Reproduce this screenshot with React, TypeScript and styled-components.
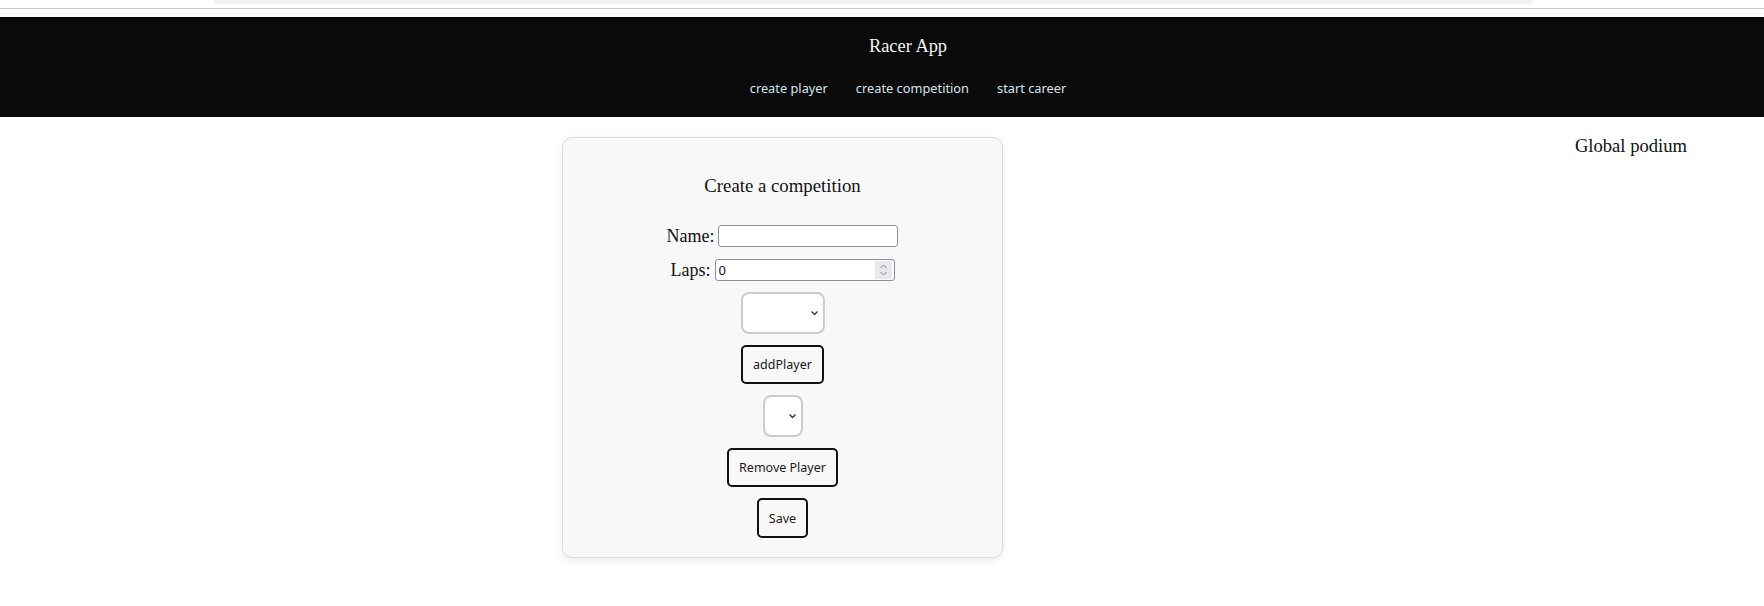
import React from "react";
import styled, { createGlobalStyle } from "styled-components";

const GlobalStyle = createGlobalStyle`
  html, body {
    margin: 0;
    padding: 0;
    background: #ffffff;
  }
  body {
    font-family: "Liberation Serif", "DejaVu Serif", serif;
    color: #111111;
  }
  * { box-sizing: border-box; }
`;

const Page = styled.div`
  width: 1764px;
  min-height: 606px;
  background: #ffffff;
`;

const TopStrip = styled.div`
  height: 17px;
  display: flex;
  flex-direction: column;
`;

const Tab = styled.div`
  margin-left: 214px;
  width: 1319px;
  height: 4px;
  background: #f1f1f1;
  border-radius: 0 0 6px 6px;
`;

const Divider = styled.div`
  margin-top: 4px;
  height: 1px;
  background: #c8c8c8;
`;

const Header = styled.header`
  height: 100px;
  background: #0a0a0a;
  display: flex;
  flex-direction: column;
  align-items: center;
  padding-top: 19px;
`;

const Title = styled.div`
  font-family: "Liberation Serif", serif;
  font-size: 18.4px;
  line-height: 20px;
  color: #f2f2f2;
  margin-left: 52px;
`;

const Nav = styled.nav`
  margin-top: 24px;
  display: flex;
  gap: 28px;
  margin-left: 52px;
`;

const NavLink = styled.a`
  font-family: "Noto Sans", "Open Sans", sans-serif;
  font-size: 12.8px;
  line-height: 16px;
  color: #d3e4f1;
  text-decoration: none;
  cursor: pointer;
`;

const Main = styled.main`
  display: flex;
  align-items: flex-start;
`;

const Card = styled.section`
  margin-top: 20px;
  margin-left: 562px;
  width: 441px;
  background: #f8f8f8;
  border: 1px solid #dcdcdc;
  border-radius: 10px;
  box-shadow: 0 3px 8px rgba(0, 0, 0, 0.08);
  padding: 37px 20px 19px;
  display: flex;
  flex-direction: column;
  align-items: center;
  gap: 11px;
`;

const CardTitle = styled.h3`
  margin: 0 0 17px;
  font-family: "Liberation Serif", serif;
  font-weight: normal;
  font-size: 18.8px;
  line-height: 22px;
  color: #111;
`;

const FieldRow = styled.label<{ $extra?: number }>`
  display: flex;
  align-items: center;
  gap: 4px;
  height: 22px;
  margin-top: ${(p) => p.$extra ?? 0}px;
`;

const LabelText = styled.span`
  font-family: "Liberation Serif", serif;
  font-size: 18px;
  color: #111;
`;

const TextInput = styled.input`
  width: 180px;
  height: 22px;
  border: 1px solid #8f8d9d;
  border-radius: 3px;
  background: #ffffff;
  font-family: "Noto Sans", sans-serif;
  font-size: 13px;
  padding: 0 3px;
  outline: none;
  color: #111;
  &::-webkit-inner-spin-button,
  &::-webkit-outer-spin-button {
    -webkit-appearance: none;
    margin: 0;
  }
  -moz-appearance: textfield;
`;

const NumberWrap = styled.div`
  position: relative;
  display: flex;
`;

const Spinner = styled.span`
  position: absolute;
  right: 3px;
  top: 2px;
  width: 17px;
  height: 18px;
  background: #e9e9ed;
  display: flex;
  align-items: center;
  justify-content: center;
  pointer-events: none;
`;

const SelectWrap = styled.div<{ $w: number; $h: number }>`
  position: relative;
  width: ${(p) => p.$w}px;
  height: ${(p) => p.$h}px;
`;

const Select = styled.select`
  appearance: none;
  -webkit-appearance: none;
  width: 100%;
  height: 100%;
  border: 2px solid #cccccc;
  border-radius: 8px;
  background: #ffffff;
  font-family: "Noto Sans", sans-serif;
  font-size: 13px;
  outline: none;
`;

const Chevron = styled.svg`
  position: absolute;
  right: 6px;
  top: 50%;
  margin-top: -4px;
  pointer-events: none;
`;

const Button = styled.button<{ $h?: number }>`
  height: ${(p) => p.$h ?? 39}px;
  padding: 0 10px;
  border: 2px solid #111111;
  border-radius: 5px;
  background: #f8f8f8;
  font-family: "Noto Sans", "Open Sans", sans-serif;
  font-size: 12.5px;
  color: #1a1a1a;
  cursor: pointer;
`;

const Podium = styled.h3`
  margin: 18px 77px 0 auto;
  font-family: "Liberation Serif", serif;
  font-weight: normal;
  font-size: 18.6px;
  line-height: 22px;
  color: #111;
`;

const ChevronIcon = () => (
  <Chevron width="9" height="8" viewBox="0 0 9 8">
    <path d="M1.5 2.5 L4.5 5.5 L7.5 2.5" fill="none" stroke="#333" strokeWidth="1.3" />
  </Chevron>
);

export default function App() {
  return (
    <Page>
      <GlobalStyle />
      <TopStrip>
        <Tab />
        <Divider />
      </TopStrip>
      <Header>
        <Title>Racer App</Title>
        <Nav>
          <NavLink>create player</NavLink>
          <NavLink>create competition</NavLink>
          <NavLink>start career</NavLink>
        </Nav>
      </Header>
      <Main>
        <Card>
          <CardTitle>Create a competition</CardTitle>
          <FieldRow>
            <LabelText>Name:</LabelText>
            <TextInput type="text" defaultValue="" />
          </FieldRow>
          <FieldRow $extra={1}>
            <LabelText>Laps:</LabelText>
            <NumberWrap>
              <TextInput type="number" defaultValue={0} />
              <Spinner>
                <svg width="11" height="14" viewBox="0 0 11 14">
                  <path d="M2.5 5 L5.5 2 L8.5 5" fill="none" stroke="#888" strokeWidth="1" />
                  <path d="M2.5 9 L5.5 12 L8.5 9" fill="none" stroke="#888" strokeWidth="1" />
                </svg>
              </Spinner>
            </NumberWrap>
          </FieldRow>
          <SelectWrap $w={84} $h={42}>
            <Select defaultValue="">
              <option value=""></option>
            </Select>
            <ChevronIcon />
          </SelectWrap>
          <Button>addPlayer</Button>
          <SelectWrap $w={40} $h={42}>
            <Select defaultValue="">
              <option value=""></option>
            </Select>
            <ChevronIcon />
          </SelectWrap>
          <Button>Remove Player</Button>
          <Button $h={40}>Save</Button>
        </Card>
        <Podium>Global podium</Podium>
      </Main>
    </Page>
  );
}
